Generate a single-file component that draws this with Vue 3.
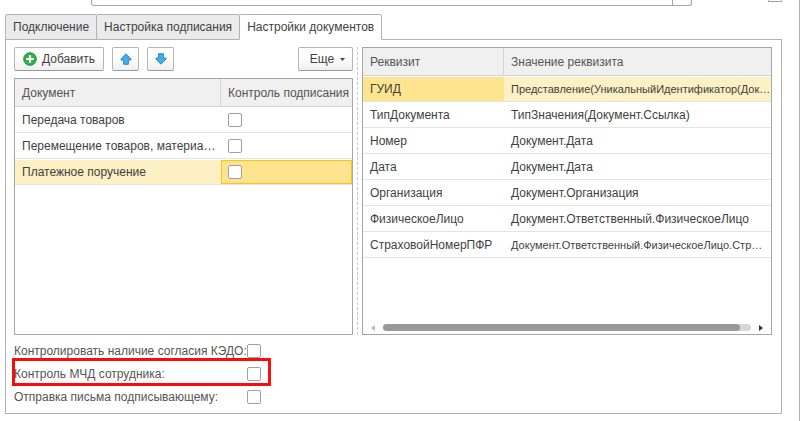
<template>
  <main class="window">
    <header class="top-row">
      <div class="top-field">
        <input type="text" aria-label="Значение" />
        <button type="button" aria-label="Выбрать"></button>
      </div>
      <input type="checkbox" class="check top-check" aria-label="Признак" />
    </header>

    <nav class="tabs" role="tablist">
      <button
        v-for="tab in tabs"
        :key="tab"
        type="button"
        role="tab"
        class="tab"
        :class="{ active: tab === activeTab }"
        :aria-selected="tab === activeTab"
        @click="activeTab = tab"
      >{{ tab }}</button>
    </nav>

    <section class="panel">
      <div class="columns">
        <div class="left">
          <div class="toolbar">
            <button type="button" class="btn btn-add">
              <svg width="14" height="14" viewBox="0 0 14 14" aria-hidden="true">
                <circle cx="7" cy="7" r="6.3" fill="#2fae49" stroke="#1f9339" />
                <path d="M7 3.2v7.6M3.2 7h7.6" stroke="#fff" stroke-width="2.2" />
              </svg>
              <span>Добавить</span>
            </button>
            <button type="button" class="btn btn-icon" aria-label="Вверх">
              <svg width="12" height="12" viewBox="0 0 12 12" aria-hidden="true">
                <path d="M6 .8 11 6v1H8.4v4.3H3.6V7H1V6z" fill="#41aeea" stroke="#2382bd" stroke-width=".9" stroke-linejoin="round" />
              </svg>
            </button>
            <button type="button" class="btn btn-icon" aria-label="Вниз">
              <svg width="12" height="12" viewBox="0 0 12 12" aria-hidden="true">
                <path d="M6 11.2 11 6V5H8.4V.7H3.6V5H1v1z" fill="#41aeea" stroke="#2382bd" stroke-width=".9" stroke-linejoin="round" />
              </svg>
            </button>
            <button type="button" class="btn btn-more">
              <span>Еще</span>
              <svg width="5" height="3" viewBox="0 0 5 3" aria-hidden="true">
                <path d="M0 0h5L2.5 3z" fill="#444" />
              </svg>
            </button>
          </div>

          <div class="list">
            <table class="docs">
              <thead>
                <tr>
                  <th class="col-doc">Документ</th>
                  <th>Контроль подписания</th>
                </tr>
              </thead>
              <tbody>
                <tr
                  v-for="doc in documents"
                  :key="doc.name"
                  :class="{ selected: doc.name === selectedDoc }"
                  @click="selectedDoc = doc.name"
                >
                  <td>{{ doc.name }}</td>
                  <td>
                    <input v-model="doc.control" type="checkbox" class="check" :aria-label="doc.name" />
                  </td>
                </tr>
              </tbody>
            </table>
          </div>
        </div>

        <div class="splitter"></div>

        <div class="list list-right">
          <table class="props">
            <thead>
              <tr>
                <th class="col-name">Реквизит</th>
                <th>Значение реквизита</th>
              </tr>
            </thead>
            <tbody>
              <tr
                v-for="prop in props"
                :key="prop.name"
                :class="{ selected: prop.name === selectedProp }"
                @click="selectedProp = prop.name"
              >
                <td>{{ prop.name }}</td>
                <td :class="{ long: prop.value.length > 40 }">{{ prop.value }}</td>
              </tr>
            </tbody>
          </table>
          <div class="scroll">
            <svg width="4" height="6" viewBox="0 0 4 6" aria-hidden="true">
              <path d="M4 0v6L0 3z" fill="#bbb" />
            </svg>
            <div class="track"><div class="thumb"></div></div>
            <svg width="4" height="6" viewBox="0 0 4 6" aria-hidden="true">
              <path d="M0 0v6l4-3z" fill="#333" />
            </svg>
          </div>
        </div>
      </div>

      <div class="options">
        <div v-for="opt in options" :key="opt.id" class="option" :class="{ marked: opt.marked }">
          <label :for="opt.id">{{ opt.label }}</label>
          <input :id="opt.id" v-model="opt.value" type="checkbox" class="check" />
        </div>
      </div>
    </section>
  </main>
</template>

<script setup>
import { ref } from 'vue';

const tabs = ['Подключение', 'Настройка подписания', 'Настройки документов'];
const activeTab = ref('Настройки документов');

const documents = ref([
  { name: 'Передача товаров', control: false },
  { name: 'Перемещение товаров, материа…', control: false },
  { name: 'Платежное поручение', control: false },
]);
const selectedDoc = ref('Платежное поручение');

const props = [
  { name: 'ГУИД', value: 'Представление(УникальныйИдентификатор(Док…' },
  { name: 'ТипДокумента', value: 'ТипЗначения(Документ.Ссылка)' },
  { name: 'Номер', value: 'Документ.Дата' },
  { name: 'Дата', value: 'Документ.Дата' },
  { name: 'Организация', value: 'Документ.Организация' },
  { name: 'ФизическоеЛицо', value: 'Документ.Ответственный.ФизическоеЛицо' },
  { name: 'СтраховойНомерПФР', value: 'Документ.Ответственный.ФизическоеЛицо.Стр…' },
];
const selectedProp = ref('ГУИД');

const options = ref([
  { id: 'kedo', label: 'Контролировать наличие согласия КЭДО:', value: false },
  { id: 'mchd', label: 'Контроль МЧД сотрудника:', value: false, marked: true },
  { id: 'mail', label: 'Отправка письма подписывающему:', value: false },
]);
</script>

<style>
body {
  background: #fff;
}
</style>

<style scoped>
* {
  box-sizing: border-box;
}

.window {
  min-height: 100vh;
  padding: 0 17px 7px 5px;
  border-right: 1px solid #b0b0b0;
  font-family: 'Liberation Sans', Arial, sans-serif;
  font-size: 12px;
  line-height: 16px;
  color: #3f3f3f;
}

button,
input {
  margin: 0;
  font: inherit;
  color: inherit;
}

.top-row {
  display: flex;
  justify-content: space-between;
  align-items: flex-start;
  height: 14px;
  padding-left: 86px;
}

.top-field {
  display: flex;
  flex: 1;
  height: 6px;
  margin-right: 76px;
  border: 1px solid #a6a6a6;
  border-top: none;
  border-radius: 0 0 3px 3px;
}

.top-field input {
  flex: 1;
  min-width: 0;
  height: 5px;
  padding: 0;
  border: none;
  outline: none;
  background: transparent;
}

.top-field button {
  width: 19px;
  height: 5px;
  padding: 0;
  border: none;
  border-left: 1px solid #a6a6a6;
  background: transparent;
}

.check {
  appearance: none;
  flex: none;
  display: block;
  width: 14px;
  height: 14px;
  border: 1px solid #a0a0a0;
  border-radius: 2px;
  background: #fff;
}

.check:checked {
  background: #7a7a7a;
  box-shadow: inset 0 0 0 2px #fff;
}

.top-check {
  height: 2px;
  border-top: none;
}

.tabs {
  display: flex;
  margin-bottom: -1px;
}

.tab {
  height: 26px;
  padding: 0 7px;
  border: 1px solid #b3b3b3;
  border-radius: 2px 2px 0 0;
  background: #ebebeb;
  white-space: nowrap;
}

.tab + .tab {
  margin-left: -1px;
}

.tab.active {
  border-bottom-color: #fff;
  background: #fff;
}

.panel {
  padding: 7px 9px 5px 8px;
  border: 1px solid #b3b3b3;
}

.columns {
  display: grid;
  grid-template-columns: minmax(0, 339fr) 1px minmax(0, 410fr);
  column-gap: 4px;
}

.left {
  display: flex;
  flex-direction: column;
}

.toolbar {
  display: flex;
  gap: 8px;
  margin-bottom: 7px;
}

.btn {
  display: flex;
  align-items: center;
  justify-content: center;
  height: 24px;
  padding: 0;
  border: 1px solid #b5b5b5;
  border-bottom-color: #999;
  border-radius: 2px;
  background: linear-gradient(#fff 40%, #efefef);
}

.btn-add {
  gap: 5px;
  width: 90px;
}

.btn-icon {
  width: 27px;
}

.btn-more {
  gap: 6px;
  width: 55px;
  margin-left: auto;
  padding-left: 4px;
}

.list {
  display: flex;
  flex: 1;
  flex-direction: column;
  border: 1px solid #a6a6a6;
}

.list-right {
  min-height: 288px;
}

.splitter {
  border-left: 1px dashed #c8c8c8;
}

table {
  width: 100%;
  table-layout: fixed;
  border-collapse: separate;
  border-spacing: 0;
}

th {
  height: 28px;
  padding: 0 0 0 7px;
  border-bottom: 1px solid #d4d4d4;
  background: #f0f0f0;
  font-weight: normal;
  text-align: left;
  white-space: nowrap;
  color: #555;
}

td {
  height: 26px;
  padding: 0 0 0 7px;
  border-bottom: 1px solid #e4e4e4;
  overflow: hidden;
  white-space: nowrap;
}

th:first-child {
  border-right: 1px solid #d4d4d4;
}

.col-doc {
  width: 206px;
}

.col-name {
  width: 141px;
}

/* Длинные выражения чуть мельче, чтобы помещались в колонку */
.long {
  font-size: 11px;
}

.selected td {
  border-top: 1px solid #fff;
  background: #fdf0c4;
  background-clip: padding-box;
}

.docs .selected td:last-child {
  background: #fee48f;
  box-shadow: inset 0 0 0 1px #fcc419;
}

.props .selected td:first-child {
  background: #fee48f;
}

.scroll {
  display: flex;
  align-items: center;
  gap: 8px;
  margin-top: auto;
  padding: 2px 8px 3px;
}

.track {
  flex: 1;
  height: 7px;
  border-radius: 4px;
  background: #d6d6d6;
}

.thumb {
  width: 97%;
  height: 7px;
  border-radius: 4px;
  background: #999;
}

.options {
  display: flex;
  flex-direction: column;
  align-items: flex-start;
  margin-top: 4px;
}

.option {
  display: flex;
  align-items: center;
  justify-content: space-between;
  width: 247px;
  height: 23px;
  white-space: nowrap;
  color: #555;
}

/* Выделенная настройка: рамка выходит за границы строки */
.marked {
  position: relative;
}

.marked::after {
  content: '';
  position: absolute;
  inset: -4px -10px -1px -2px;
  border: 3px solid #fb0d0d;
  pointer-events: none;
}
</style>
